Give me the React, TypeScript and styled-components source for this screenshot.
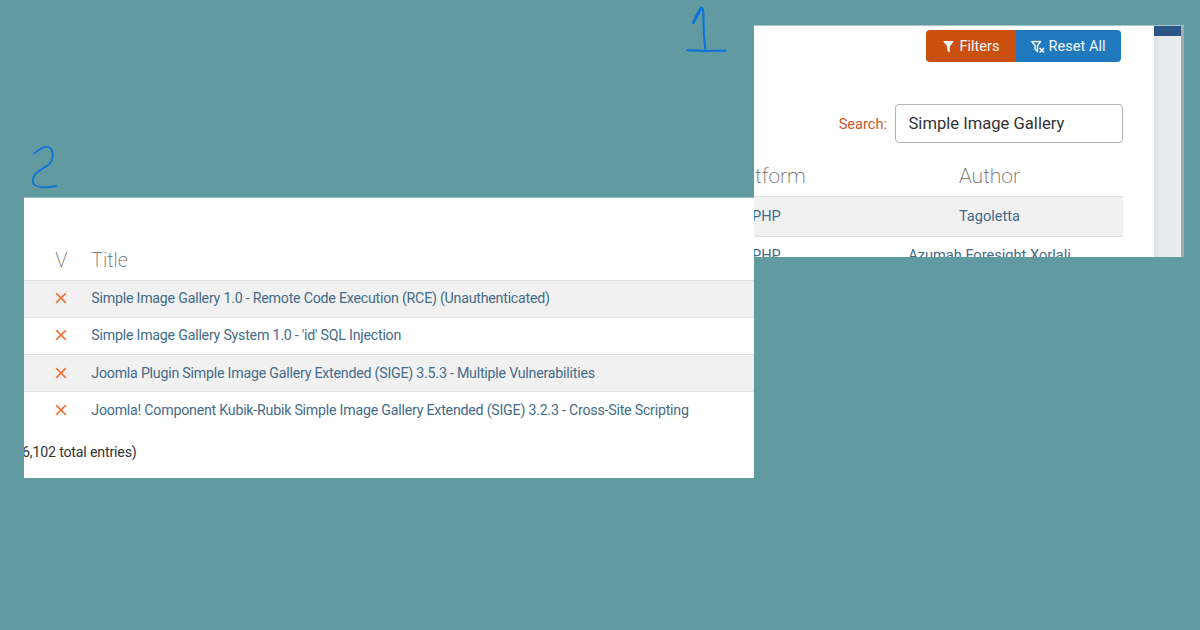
import React from "react";
import styled, { createGlobalStyle } from "styled-components";

const GlobalStyle = createGlobalStyle`
  * { box-sizing: border-box; }
  body { margin: 0; background: #629aa2; font-family: Roboto, "Liberation Sans", sans-serif; }
`;

const Canvas = styled.main`
  position: relative;
  width: 1200px;
  height: 630px;
  overflow: hidden;
  background: #629aa2;
`;

const Mark = styled.svg<{ $x: number; $y: number }>`
  position: absolute;
  left: ${(p) => p.$x}px;
  top: ${(p) => p.$y}px;
  fill: none;
  stroke: #0c74d8;
  stroke-linecap: round;
  stroke-linejoin: round;
`;

const ResultsPanel = styled.section`
  position: absolute;
  left: 24px;
  top: 198px;
  width: 730px;
  height: 280px;
  padding-top: 42px;
  overflow: hidden;
  background: #fff;
  box-shadow: 0 -1px 0 #8fb7bd;
`;

const SearchPanel = styled.section`
  position: absolute;
  left: 754px;
  top: 26px;
  width: 430px;
  height: 231px;
  display: flex;
  overflow: hidden;
  background: #fff;
  box-shadow: 0 -1px 0 #a5c5c9;
`;

const Text = styled.span<{ $size: number; $spacing?: number }>`
  font-size: ${(p) => p.$size}px;
  letter-spacing: ${(p) => p.$spacing ?? 0}px;
  white-space: nowrap;
`;

const ResultHead = styled.div`
  display: grid;
  grid-template-columns: 67px 1fr;
  align-items: center;
  height: 40px;
  color: #666;
  font-weight: 200;
`;

const ResultRow = styled.div<{ $striped: boolean; $lift: number }>`
  display: grid;
  grid-template-columns: 67.3px 1fr;
  align-items: center;
  height: 37px;
  padding-bottom: ${(p) => p.$lift}px;
  border-top: 1px solid ${(p) => (p.$striped ? "#dde0e2" : "#dfe2e4")};
  background: ${(p) => (p.$striped ? "#f1f1f1" : "#fff")};
  color: #446b89;
`;

const VerifiedCell = styled.div`
  display: flex;
  justify-content: center;
  padding-left: 7.5px;
`;

const Summary = styled.footer`
  margin: 14px 0 0 -2px;
  line-height: 20px;
  color: #333;
`;

const Content = styled.div`
  width: 400px;
  padding-top: 4px;
`;

const ButtonGroup = styled.div`
  display: flex;
  width: 195px;
  height: 32px;
  margin-left: 172px;
  border-radius: 4px;
  overflow: hidden;
`;

const Button = styled.button<{ $color: string; $width: number }>`
  display: flex;
  align-items: center;
  justify-content: center;
  gap: 3px;
  width: ${(p) => p.$width}px;
  padding: 0 1px 0 0;
  border: 0;
  background: ${(p) => p.$color};
  color: #f2f7fa;
  font-family: inherit;
`;

const SearchRow = styled.label`
  display: flex;
  align-items: center;
  justify-content: flex-end;
  gap: 8px;
  margin: 42px 31px 0 0;
  color: #cd5627;
`;

const SearchInput = styled.input`
  width: 228px;
  height: 39px;
  padding: 0 12.5px;
  border: 1px solid #adb3b6;
  border-radius: 4px;
  background: #fff;
  color: #333;
  font: 400 16.6px Roboto, sans-serif;
`;

const PlatformRow = styled.div<{ $striped?: boolean; $head?: boolean; $lift?: number }>`
  display: grid;
  grid-template-columns: 102px 267px;
  align-items: center;
  width: 369px;
  height: ${(p) => (p.$head ? 42 : 40)}px;
  margin-top: ${(p) => (p.$head ? 11 : 0)}px;
  padding: ${(p) => (p.$head ? "1px 0 0" : `0 0 ${p.$lift ?? 2}px`)};
  border-top: ${(p) => (p.$head ? "0" : "1px solid #dee1e4")};
  background: ${(p) => (p.$striped ? "#f1f1f1" : "#fff")};
  color: ${(p) => (p.$head ? "#666" : "#446b89")};
  font-weight: ${(p) => (p.$head ? 200 : 400)};
  & > :last-child { text-align: center; }
`;

const Platform = styled.div<{ $shift: number }>`
  margin-left: ${(p) => p.$shift}px;
`;

const PageEdge = styled.aside`
  width: 30px;
  border-right: 3px solid #a7a9ae;
  background: linear-gradient(90deg, #dfe1e4, #e9ebef 8px);
  &::before {
    content: "";
    display: block;
    height: 10px;
    background: #2c5688;
  }
`;

const results = [
  "Simple Image Gallery 1.0 - Remote Code Execution (RCE) (Unauthenticated)",
  "Simple Image Gallery System 1.0 - 'id' SQL Injection",
  "Joomla Plugin Simple Image Gallery Extended (SIGE) 3.5.3 - Multiple Vulnerabilities",
  "Joomla! Component Kubik-Rubik Simple Image Gallery Extended (SIGE) 3.2.3 - Cross-Site Scripting",
];

const CloseIcon = () => (
  <svg width="18" height="18" viewBox="0 0 24 24" fill="#ed7036" stroke="#ed7036" strokeWidth="0.4">
    <path d="M19,6.41L17.59,5L12,10.59L6.41,5L5,6.41L10.59,12L5,17.59L6.41,19L12,13.41L17.59,19L19,17.59L13.41,12L19,6.41Z" />
  </svg>
);

const FilterIcon = () => (
  <svg width="15" height="15" viewBox="0 0 24 24" fill="currentColor">
    <path d="M14,12V19.88C14.04,20.18 13.94,20.5 13.71,20.71C13.32,21.1 12.69,21.1 12.3,20.71L10.29,18.7C10.06,18.47 9.96,18.16 10,17.87V12H9.97L4.21,4.62C3.87,4.19 3.95,3.56 4.38,3.22C4.57,3.08 4.78,3 5,3H19C19.22,3 19.43,3.08 19.62,3.22C20.05,3.56 20.13,4.19 19.79,4.62L14.03,12H14Z" />
  </svg>
);

const ResetIcon = () => (
  <svg width="15" height="15" viewBox="0 0 24 24" fill="currentColor" stroke="currentColor" strokeWidth="0.4">
    <path d="M14.73,20.83L17.58,18L14.73,15.17L16.15,13.76L19,16.57L21.8,13.76L23.22,15.17L20.41,18L23.22,20.83L21.8,22.24L19,19.4L16.15,22.24L14.73,20.83M13,19.88C13.04,20.18 12.94,20.5 12.71,20.71C12.32,21.1 11.69,21.1 11.29,20.71L7.29,16.7C7.06,16.47 6.96,16.16 7,15.87V10.75L2.21,4.62C1.87,4.19 1.95,3.56 2.38,3.22C2.57,3.08 2.78,3 3,3H17C17.22,3 17.43,3.08 17.62,3.22C18.05,3.56 18.13,4.19 17.79,4.62L13,10.75V19.88M5.04,5L9,10.06V15.58L11,17.58V10.05L14.96,5H5.04Z" />
  </svg>
);

export default function App() {
  return (
    <Canvas>
      <GlobalStyle />
      <Mark $x={680} $y={0} width="54" height="60">
        <path d="M13.3 22.5 C16 17 19 10 21.5 7.5 C23.5 8 23.5 15 23.6 23 C23.8 35 24.5 43 25.3 49.5" strokeWidth="2.1" />
        <path d="M13.3 22.5 L20.5 9" strokeWidth="2.8" />
        <path d="M7 50.2 C15 50.2 19 51.2 26 51 S38 50.8 45.5 50.6" strokeWidth="2.1" />
      </Mark>
      <Mark $x={25} $y={140} width="40" height="55">
        <path d="M9 13.5 C14 9.5 18 6.6 21.5 6.7 C26 7 28 11 27.6 17 C27 25 19 27 14 31 C8 35 6 41 9.5 44.5 C13 48.3 23 47.5 31 46" strokeWidth="1.8" />
      </Mark>
      <ResultsPanel>
        <ResultHead>
          <VerifiedCell><Text $size={20}>V</Text></VerifiedCell>
          <Text $size={20}>Title</Text>
        </ResultHead>
        {results.map((title, i) => (
          <ResultRow key={title} $striped={i % 2 === 0} $lift={i < 2 ? 1.4 : 0}>
            <VerifiedCell><CloseIcon /></VerifiedCell>
            <Text $size={14.2} $spacing={-0.222}>{title}</Text>
          </ResultRow>
        ))}
        <Summary><Text $size={14.2} $spacing={-0.18}>6,102 total entries)</Text></Summary>
      </ResultsPanel>
      <SearchPanel>
        <Content>
          <ButtonGroup>
            <Button $color="#c9500e" $width={90}><FilterIcon /><Text $size={14.6}>Filters</Text></Button>
            <Button $color="#2079bc" $width={105}><ResetIcon /><Text $size={14.6}>Reset All</Text></Button>
          </ButtonGroup>
          <SearchRow>
            <Text $size={14.6}>Search:</Text>
            <SearchInput defaultValue="Simple Image Gallery" />
          </SearchRow>
          <PlatformRow $head>
            <Platform $shift={1}><Text $size={21}>tform</Text></Platform>
            <Text $size={21}>Author</Text>
          </PlatformRow>
          <PlatformRow $striped>
            <Platform $shift={-2}><Text $size={14.6}>PHP</Text></Platform>
            <Text $size={14.6}>Tagoletta</Text>
          </PlatformRow>
          <PlatformRow $lift={4}>
            <Platform $shift={-2}><Text $size={14.6}>PHP</Text></Platform>
            <Text $size={14.6}>Azumah Foresight Xorlali</Text>
          </PlatformRow>
        </Content>
        <PageEdge />
      </SearchPanel>
    </Canvas>
  );
}
